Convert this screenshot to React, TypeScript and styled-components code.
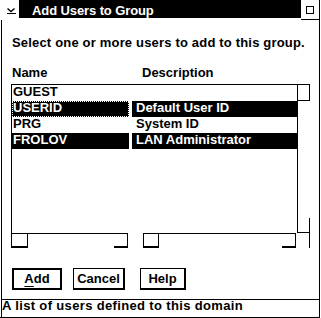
import React from "react";
import styled, { createGlobalStyle } from "styled-components";

const GlobalStyle = createGlobalStyle`
  html, body { margin: 0; padding: 0; background: #fff; }
  body {
    font-family: "Liberation Sans", Arial, sans-serif;
    font-weight: 700;
    font-size: 13px;
    color: #000;
  }
`;

const Window = styled.div`
  box-sizing: border-box;
  width: 320px;
  height: 318px;
  border-right: 1px solid #000;
  border-bottom: 1px solid #000;
  display: flex;
  flex-direction: column;
  background: #fff;
`;

const TitleBar = styled.div`
  display: flex;
  align-items: flex-start;
  height: 20px;
  flex: none;
`;

const SysMenu = styled.div`
  width: 19px;
  height: 20px;
  flex: none;
  display: flex;
`;

const Caption = styled.div`
  flex: 1;
  height: 18px;
  box-sizing: border-box;
  background: #000;
  color: #fff;
  padding: 3px 0 0 13px;
  line-height: 15px;
  letter-spacing: -0.1px;
  white-space: nowrap;
`;

const MaxButton = styled.div`
  width: 18px;
  height: 20px;
  flex: none;
  box-sizing: border-box;
  border-bottom: 1px solid #000;
  display: flex;
`;

const Frame = styled.div`
  flex: 1;
  min-height: 0;
  margin-left: 1px;
  border-left: 1px solid #000;
  display: flex;
  flex-direction: column;
`;

const Content = styled.div`
  padding: 0 9px;
  display: flex;
  flex-direction: column;
`;

const Prompt = styled.div`
  margin-top: 15px;
  padding-left: 1px;
  line-height: 16px;
  letter-spacing: 0.18px;
  white-space: nowrap;
`;

const Header = styled.div`
  margin-top: 14px;
  padding-left: 1px;
  display: grid;
  grid-template-columns: 130px 1fr;
  line-height: 16px;
`;

const ListBox = styled.div`
  margin-top: 3px;
  box-sizing: border-box;
  width: 299px;
  height: 164px;
  border-left: 1px solid #000;
  border-top: 1px solid #000;
  display: flex;
  flex-direction: column;
`;

const ListBody = styled.div`
  display: flex;
  height: 148px;
  flex: none;
`;

const Rows = styled.div`
  width: 285px;
  display: flex;
  flex-direction: column;
`;

const Row = styled.div`
  display: grid;
  grid-template-columns: 117px 165px;
  column-gap: 3px;
  height: 16px;
`;

const Cell = styled.div<{ $selected?: boolean; $focused?: boolean; $indent: number }>`
  box-sizing: border-box;
  height: 16px;
  padding-left: ${(p) => p.$indent}px;
  line-height: 14px;
  white-space: nowrap;
  overflow: hidden;
  background: ${(p) => (p.$selected ? "#000" : "#fff")};
  color: ${(p) => (p.$selected ? "#fff" : "#000")};
  outline: ${(p) => (p.$focused ? "1px dotted #fff" : "none")};
  outline-offset: -1px;
`;

const VScroll = styled.div`
  width: 13px;
  box-sizing: border-box;
  border-left: 1px solid #000;
  display: flex;
  flex-direction: column;
  justify-content: space-between;
`;

const VArrow = styled.div<{ $h: number }>`
  height: ${(p) => p.$h}px;
  box-sizing: border-box;
  border-right: 1px solid #000;
  border-bottom: 1px solid #000;
`;

const HScrollRow = styled.div`
  display: flex;
  height: 15px;
  flex: none;
`;

const HScroll = styled.div<{ $w: number; $offset: number; $edge?: boolean }>`
  box-sizing: border-box;
  width: ${(p) => p.$w}px;
  margin-left: ${(p) => p.$offset}px;
  border-top: 1px solid #000;
  border-left: ${(p) => (p.$edge ? "1px solid #000" : "none")};
  display: flex;
  justify-content: space-between;
`;

const HArrow = styled.div<{ $w: number }>`
  box-sizing: border-box;
  width: ${(p) => p.$w}px;
  height: 14px;
  border-right: 1px solid #000;
  border-bottom: 2px solid #000;
`;

const Corner = styled.div`
  margin-left: auto;
  width: 13px;
  box-sizing: border-box;
  border-right: 1px solid #000;
`;

const ButtonRow = styled.div`
  margin-top: 20px;
  padding-left: 1px;
  display: flex;
`;

const Button = styled.button<{ $w: number; $default?: boolean; $space: number }>`
  box-sizing: border-box;
  width: ${(p) => p.$w}px;
  height: 22px;
  margin: 0 0 0 ${(p) => p.$space}px;
  padding: 0;
  background: #fff;
  color: #000;
  font: inherit;
  text-align: center;
  border-style: solid;
  border-color: #000;
  border-width: ${(p) => (p.$default ? "2px" : "1px 2px 2px 1px")};
  line-height: ${(p) => (p.$default ? 18 : 19)}px;
  border-radius: 0;
`;

const Mnemonic = styled.span`
  text-decoration: underline;
  text-underline-offset: 3px;
`;

const StatusBar = styled.div`
  margin-top: auto;
  box-sizing: border-box;
  height: 18px;
  border-top: 1px solid #000;
  line-height: 12px;
  letter-spacing: 0.35px;
  white-space: nowrap;
`;

const users = [
  { name: "GUEST", desc: "", selected: false, focused: false },
  { name: "USERID", desc: "Default User ID", selected: true, focused: true },
  { name: "PRG", desc: "System ID", selected: false, focused: false },
  { name: "FROLOV", desc: "LAN Administrator", selected: true, focused: false },
];

export default function App() {
  return (
    <>
      <GlobalStyle />
      <Window>
        <TitleBar>
          <SysMenu>
            <svg width="19" height="20" viewBox="0 0 19 20" shapeRendering="crispEdges">
              <polyline points="7.5,8.5 11,11.5 14.5,8.5" fill="none" stroke="#000" strokeWidth="1.4" shapeRendering="auto" />
              <rect x="7" y="13" width="9" height="1" fill="#000" />
            </svg>
          </SysMenu>
          <Caption>Add Users to Group</Caption>
          <MaxButton>
            <svg width="18" height="19" viewBox="0 0 18 19" shapeRendering="crispEdges">
              <rect x="5.5" y="6.5" width="7" height="7" fill="none" stroke="#000" strokeWidth="1" />
            </svg>
          </MaxButton>
        </TitleBar>
        <Frame>
          <Content>
            <Prompt>Select one or more users to add to this group.</Prompt>
            <Header>
              <span>Name</span>
              <span>Description</span>
            </Header>
            <ListBox>
              <ListBody>
                <Rows>
                  {users.map((u) => (
                    <Row key={u.name}>
                      <Cell $indent={1} $selected={u.selected} $focused={u.focused}>
                        {u.name}
                      </Cell>
                      <Cell $indent={4} $selected={u.selected}>
                        {u.desc}
                      </Cell>
                    </Row>
                  ))}
                </Rows>
                <VScroll>
                  <VArrow $h={16} />
                  <VArrow $h={15} />
                </VScroll>
              </ListBody>
              <HScrollRow>
                <HScroll $w={116} $offset={0}>
                  <HArrow $w={16} />
                  <HArrow $w={14} />
                </HScroll>
                <HScroll $w={153} $offset={15} $edge>
                  <HArrow $w={15} />
                  <HArrow $w={14} />
                </HScroll>
                <Corner />
              </HScrollRow>
            </ListBox>
            <ButtonRow>
              <Button $w={50} $default $space={0}>
                <Mnemonic>A</Mnemonic>dd
              </Button>
              <Button $w={52} $space={11}>Cancel</Button>
              <Button $w={46} $space={15}>Help</Button>
            </ButtonRow>
          </Content>
          <StatusBar>A list of users defined to this domain</StatusBar>
        </Frame>
      </Window>
    </>
  );
}
